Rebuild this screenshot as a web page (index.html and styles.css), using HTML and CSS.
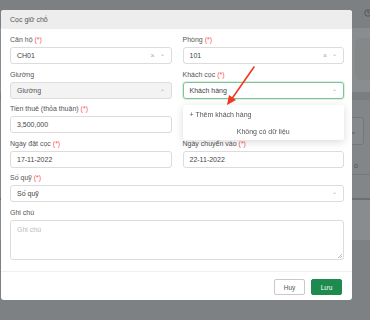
FILE: index.html
```html
<!DOCTYPE html>
<html lang="vi">
<head>
    <meta charset="UTF-8">
    <meta name="viewport" content="width=device-width, initial-scale=1.0">
    <title>Cọc giữ chỗ</title>
    <link rel="stylesheet" href="styles.css">
</head>
<body>
    <!-- page behind the overlay -->
    <div class="backdrop">
        <div class="bg-topbar">
            <svg class="bg-clock" width="8" height="8" viewBox="0 0 10 10"><circle cx="5" cy="5" r="4" fill="none" stroke="#4a4d4f" stroke-width="1"/><path d="M5 2.5V5h2" fill="none" stroke="#4a4d4f" stroke-width="1"/></svg>
        </div>
        <div class="bg-card"><div class="bg-card-inner"></div></div>
        <div class="bg-band"></div>
        <div class="bg-section">
            <div class="bg-select"><span>&#8964;</span></div>
            <div class="bg-text">o</div>
            <div class="bg-line"></div>
        </div>
        <div class="bg-rule"></div>
        <div class="bg-light"></div>
    </div>

    <div class="modal">
        <div class="modal-header">Cọc giữ chỗ</div>
        <div class="modal-body">
            <div class="row">
                <div class="field">
                    <label>Căn hộ <span class="req">(*)</span></label>
                    <div class="input select">CH01<span class="icons"><span class="clear">×</span><span class="chev">&#8964;</span></span></div>
                </div>
                <div class="field">
                    <label>Phòng <span class="req">(*)</span></label>
                    <div class="input select">101<span class="icons"><span class="clear">×</span><span class="chev">&#8964;</span></span></div>
                </div>
            </div>
            <div class="row">
                <div class="field">
                    <label>Giường</label>
                    <div class="input select disabled">Giường<span class="icons"><span class="chev">&#8964;</span></span></div>
                </div>
                <div class="field dropdown-wrap">
                    <label>Khách cọc <span class="req">(*)</span></label>
                    <div class="input select focus">Khách hàng<span class="icons"><span class="chev up">&#8963;</span></span></div>
                    <div class="dropdown">
                        <div class="dd-add">+ Thêm khách hàng</div>
                        <div class="dd-empty">Không có dữ liệu</div>
                    </div>
                </div>
            </div>
            <div class="row">
                <div class="field">
                    <label>Tiền thuê (thỏa thuận) <span class="req">(*)</span></label>
                    <div class="input">3,500,000</div>
                </div>
                <div class="field"></div>
            </div>
            <div class="row">
                <div class="field">
                    <label>Ngày đặt cọc <span class="req">(*)</span></label>
                    <div class="input">17-11-2022</div>
                </div>
                <div class="field">
                    <label>Ngày chuyển vào <span class="req">(*)</span></label>
                    <div class="input">22-11-2022</div>
                </div>
            </div>
            <div class="row">
                <div class="field full">
                    <label>Số quỹ <span class="req">(*)</span></label>
                    <div class="input select">Số quỹ<span class="icons"><span class="chev">&#8964;</span></span></div>
                </div>
            </div>
            <div class="row">
                <div class="field full">
                    <label>Ghi chú</label>
                    <div class="textarea">Ghi chú</div>
                </div>
            </div>
        </div>
        <div class="modal-footer">
            <button class="btn btn-cancel">Huỷ</button>
            <button class="btn btn-save">Lưu</button>
        </div>

        <svg class="pointer" width="60" height="60" viewBox="0 0 60 60">
            <line x1="53" y1="7" x2="30" y2="40" stroke="#f2381f" stroke-width="1.6" stroke-linecap="round"/>
            <polygon points="26,45 28,35 35,40" fill="#f2381f"/>
        </svg>
    </div>
</body>
</html>
```

FILE: styles.css
```css
:root {
    --green: #1f8a4d;
    --border: #dcdcdc;
    --label: #555;
    --text: #444;
    --red: #ff4d4f;
}
* {
    box-sizing: border-box;
}
body {
    margin: 0;
    font-family: "Liberation Sans", Arial, sans-serif;
    font-size: 7px;
    color: var(--text);
    background: #7e8183;
    width: 370px;
    height: 320px;
    overflow: hidden;
}

/* background page */
.backdrop {
    display: flex;
    flex-direction: column;
    align-items: stretch;
}
.bg-topbar {
    height: 28px;
    background: #7d8082;
    display: flex;
    justify-content: flex-end;
    align-items: center;
}
.bg-clock {
    margin-right: -2px;
    margin-top: -2px;
}
.bg-card {
    height: 64px;
    background: #8a8d8f;
    padding: 10px 0 12px 355px;
}
.bg-card-inner {
    height: 100%;
    background: #858889;
    border-radius: 6px 0 0 6px;
}
.bg-band {
    height: 8px;
    background: #7b7e80;
}
.bg-section {
    height: 98px;
    background: #838688;
    padding: 17px 0 0 342px;
}
.bg-select {
    width: 22px;
    height: 28px;
    border: 1px solid #75787a;
    border-radius: 3px;
    background: #86898b;
    display: flex;
    align-items: center;
    justify-content: flex-end;
    padding-right: 6px;
    color: #5a5d5f;
    font-size: 8px;
}
.bg-text {
    margin: 17px 0 0 12px;
    color: #4f5254;
    font-size: 7px;
}
.bg-line {
    margin-top: 5px;
    height: 1px;
    background: #787b7d;
}
.bg-rule {
    height: 2px;
    background: #6c6f71;
}
.bg-light {
    height: 40px;
    background: #898c8e;
}

/* modal */
.modal {
    position: fixed;
    left: 1px;
    top: 10px;
    width: 351px;
    height: 290px;
    background: #fff;
    border-radius: 3px;
    display: flex;
    flex-direction: column;
}
.modal-header {
    height: 19px;
    background: #ededed;
    border-radius: 3px 3px 0 0;
    padding-left: 9px;
    display: flex;
    align-items: center;
    font-size: 7px;
    color: #555;
}
.modal-body {
    flex: 1;
    padding: 6px 8px 0 9px;
}
.row {
    display: flex;
    gap: 11px;
    margin-bottom: 5.5px;
}
.field {
    flex: 1;
    position: relative;
}
.field.full {
    flex: 1 1 100%;
}
label {
    display: block;
    height: 9px;
    line-height: 9px;
    margin-bottom: 3px;
    color: var(--label);
    font-size: 7px;
}
.req {
    color: var(--red);
}
.input {
    height: 17px;
    border: 1px solid var(--border);
    border-radius: 3px;
    padding: 0 6px;
    display: flex;
    align-items: center;
    color: var(--text);
    background: #fff;
}
.input.disabled {
    background: #f3f3f3;
    color: #555;
}
.input.focus {
    border-color: #7cc497;
    box-shadow: 0 0 0 1px rgba(124, 196, 151, 0.25);
}
.icons {
    margin-left: auto;
    display: flex;
    align-items: center;
    gap: 5px;
    color: #aaa;
}
.clear {
    font-size: 7px;
}
.chev {
    font-size: 6px;
    line-height: 6px;
    margin-top: -3px;
}
.chev.up {
    margin-top: 3px;
}
.textarea {
    position: relative;
    height: 40px;
    border: 1px solid var(--border);
    border-radius: 3px;
    padding: 5px 6px;
    color: #bbb;
}
.textarea::after {
    content: "";
    position: absolute;
    right: 1px;
    bottom: 1px;
    width: 4px;
    height: 4px;
    background: linear-gradient(135deg, transparent 45%, #bbb 45%, #bbb 55%, transparent 55%, transparent 75%, #bbb 75%, #bbb 85%, transparent 85%);
}
.dropdown {
    position: absolute;
    left: 0;
    right: 0;
    top: 35px;
    height: 35px;
    background: #fff;
    border-radius: 3px;
    box-shadow: 0 2px 8px rgba(0, 0, 0, 0.15);
    z-index: 2;
}
.dd-add {
    height: 19px;
    display: flex;
    align-items: center;
    padding-left: 7px;
    color: #555;
}
.dd-empty {
    text-align: center;
    color: #555;
    padding-top: 4px;
}
.modal-footer {
    height: 29px;
    border-top: 1px solid #f0f0f0;
    display: flex;
    justify-content: flex-end;
    align-items: flex-start;
    gap: 6px;
    padding: 7px 10px 0 0;
}
.btn {
    width: 31px;
    height: 16px;
    border-radius: 2px;
    font-family: "Liberation Sans", Arial, sans-serif;
    font-size: 6.5px;
    cursor: pointer;
    padding: 0;
}
.btn-cancel {
    background: #fff;
    border: 1px solid #c9c9c9;
    color: #555;
}
.btn-save {
    background: var(--green);
    border: 1px solid var(--green);
    color: #fff;
}
.pointer {
    position: absolute;
    left: 200px;
    top: 50px;
    z-index: 3;
}
```
